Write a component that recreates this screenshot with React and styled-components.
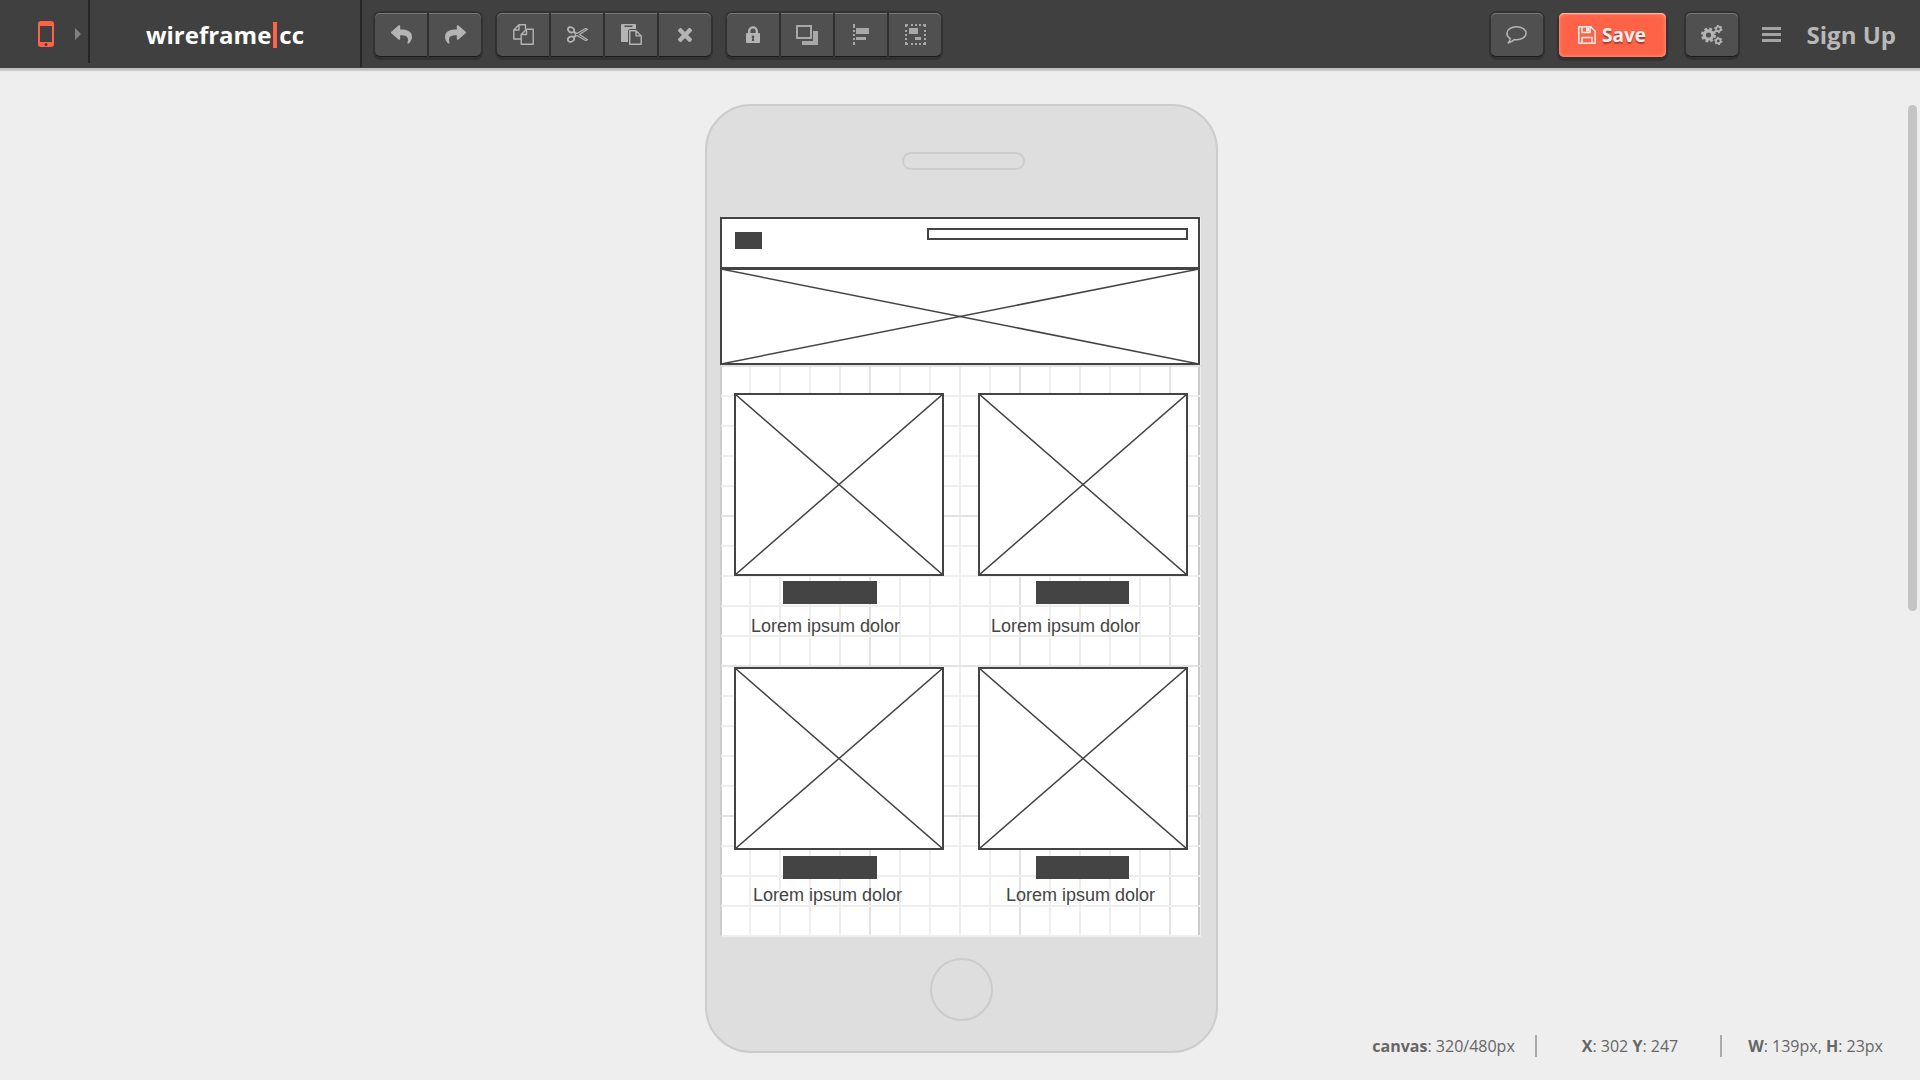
import React from "react";
import styled, { createGlobalStyle } from "styled-components";
import { FaReply, FaShare } from "react-icons/fa";

const Global = createGlobalStyle`
  *, *::before, *::after { box-sizing: border-box; }
  body { margin: 0; background: #eeeeee; font-family: "Open Sans", "Noto Sans", sans-serif; }
  button { font: inherit; padding: 0; border: 0; cursor: pointer; }
`;

const Page = styled.div`
  display: flex;
  flex-direction: column;
  min-height: 100vh;
`;

const TopBar = styled.header`
  display: flex;
  height: 68px;
  background: #404040;
  box-shadow: 0 2px 0 #c0c0c0, 0 3px 1px #d0d0d0;
`;

const DevicePicker = styled.button`
  display: flex;
  align-items: center;
  justify-content: flex-end;
  gap: 21px;
  width: 90px;
  height: 63px;
  padding: 5px 7px 0 0;
  background: none;
  border-right: 2px solid #262626;
`;

const Brand = styled.a`
  display: flex;
  align-items: center;
  justify-content: center;
  width: 272px;
  height: 67px;
  padding-top: 2px;
  border-right: 2px solid #262626;
  color: #ffffff;
  font-size: 24px;
  font-weight: 700;
  line-height: 26px;
  text-decoration: none;
`;

const Caret = styled.span`
  width: 4px;
  height: 26px;
  margin: 0 2px;
  background: #ff6347;
`;

const Tools = styled.div`
  display: flex;
  flex: 1;
  gap: 16px;
  padding: 13px 0 0 13px;
`;

const Group = styled.div`
  display: flex;
  align-self: flex-start;
  gap: 2px;
  border-radius: 6px;
  background: #303030;
  box-shadow: 0 0 0 2px #323232, 0 2px 0 2px #323232;
`;

const Tool = styled.button`
  display: flex;
  align-items: center;
  justify-content: center;
  width: 52px;
  height: 43px;
  background: #505050;
  color: #b4b4b4;
  box-shadow: inset 0 1px 0 #777777, 0 1px 0 #1c1c1c;
  &:first-child { border-radius: 5px 0 0 5px; }
  &:last-child { border-radius: 0 5px 5px 0; }
  &:only-child { border-radius: 5px; }
`;

const Actions = styled.div`
  display: flex;
  align-items: flex-start;
  padding: 13px 24px 0 0;
`;

const SaveButton = styled.button`
  display: flex;
  align-items: center;
  justify-content: center;
  gap: 6px;
  width: 107px;
  height: 44px;
  margin: 0 20px 0 16px;
  border-radius: 5px;
  background: #ff6347;
  color: #eeeeee;
  font-size: 19px;
  font-weight: 700;
  text-shadow: 0 2px 1px rgba(0, 0, 0, 0.35);
  box-shadow: inset 0 1px 1px #ffc0b4, inset 0 0 4px #ff9a86, 0 2px 0 2px #323232;
`;

const MenuButton = styled.button`
  display: flex;
  flex-direction: column;
  gap: 3px;
  margin: 14px 26px 0 24px;
  background: none;
`;

const MenuLine = styled.span`
  width: 19px;
  height: 3px;
  background: #a4a4a4;
`;

const SignUp = styled.a`
  color: #b8b8b8;
  font-size: 24px;
  font-weight: 700;
  line-height: 43px;
  text-decoration: none;
`;

const Workspace = styled.main`
  display: grid;
  grid-template-columns: 1fr auto 1fr;
  flex: 1;
  align-items: start;
  padding-top: 36px;
`;

const Phone = styled.section`
  display: flex;
  flex-direction: column;
  grid-column: 2;
  margin-left: 3px;
  margin-bottom: 28px;
  padding: 46px 16px 30px 13px;
  border: 2px solid #cccccc;
  border-radius: 46px;
  background: #dedede;
`;

const Speaker = styled.div`
  align-self: center;
  width: 123px;
  height: 18px;
  margin: 0 0 46px 6px;
  border: 2px solid #cccccc;
  border-radius: 9px;
`;

const HomeButton = styled.div`
  align-self: center;
  width: 63px;
  height: 63px;
  margin: 22px 0 0 2px;
  border: 2px solid #cccccc;
  border-radius: 50%;
`;

const Canvas = styled.div`
  position: relative;
  width: 480px;
  height: 720px;
  border-left: 2px solid #cccccc;
  border-right: 2px solid #cccccc;
  background-color: #ffffff;
`;

const Grid = styled.svg`
  position: absolute;
  left: -2px;
  top: 0;
  width: 482px;
  height: 721px;
`;

const Shape = styled.div`
  position: absolute;
  left: ${(p) => p.$x - 2}px;
  top: ${(p) => p.$y}px;
  width: ${(p) => p.$w}px;
  height: ${(p) => p.$h}px;
  border: 2px solid #444444;
  background: ${(p) => (p.$filled ? "#444444" : "#ffffff")};
`;

const Cross = styled.svg`
  display: block;
  width: calc(100% + 2px);
  height: calc(100% + 2px);
  margin: -1px;
`;

const Caption = styled.p`
  position: absolute;
  left: ${(p) => p.$x - 2}px;
  top: ${(p) => p.$y}px;
  margin: 0;
  color: #444444;
  font-family: "Liberation Sans", Arial, sans-serif;
  font-size: 18px;
  line-height: 22px;
  white-space: nowrap;
`;

const Status = styled.footer`
  display: flex;
  align-self: end;
  justify-content: flex-end;
  margin-bottom: 24px;
  padding-right: 37px;
  color: #666666;
  font-size: 16px;
  line-height: 22px;
  white-space: nowrap;
`;

const StatusItem = styled.span`
  padding: 0 ${(p) => p.$after}px 0 ${(p) => p.$before}px;
  & + & { border-left: 2px solid #aaaaaa; }
`;

const ScrollThumb = styled.div`
  position: fixed;
  top: 105px;
  right: 3px;
  width: 9px;
  height: 506px;
  border-radius: 5px;
  background: #c4c4c4;
`;

function ImageBox(props) {
  return (
    <Shape {...props}>
      <Cross viewBox="0 0 100 100" preserveAspectRatio="none">
        <path d="M0 0L100 100M100 0L0 100" stroke="#444" strokeWidth="1.5" vectorEffect="non-scaling-stroke" />
      </Cross>
    </Shape>
  );
}

const range = (n) => Array.from({ length: n }, (_, i) => i);

function GridLines() {
  return (
    <Grid>
      {range(16).map((i) => (
        <rect key={"v" + i} x={(i + 1) * 30 - (i === 15 ? 0 : 1)} y="0" width={i === 15 ? 1 : 2} height="721" fill={(i + 1) % 5 ? "#eeeeee" : "#e2e2e2"} />
      ))}
      {range(25).map((i) => (
        <rect key={"h" + i} x="1" y={i * 30 - 1} width="480" height="2" fill={i % 5 ? "#eeeeee" : "#e2e2e2"} />
      ))}
    </Grid>
  );
}

export default function App() {
  return (
    <Page>
      <Global />
      <TopBar>
        <DevicePicker aria-label="Choose device">
          <svg width="16" height="26" viewBox="0 0 16 26">
            <path fill="#ff6347" fillRule="evenodd" d="M3 0h10a3 3 0 0 1 3 3v20a3 3 0 0 1-3 3H3a3 3 0 0 1-3-3V3a3 3 0 0 1 3-3zM2 5v16h12V5zM8 22a1.500 1.500 0 1 0 0 3 1.500 1.500 0 0 0 0-3z" />
          </svg>
          <svg width="6" height="12" viewBox="0 0 6 12"><path d="M0 0L6 6L0 12z" fill="#808080" /></svg>
        </DevicePicker>
        <Brand href="#">wireframe<Caret />cc</Brand>
        <Tools>
          <Group>
            <Tool aria-label="Undo"><FaReply size={21} /></Tool>
            <Tool aria-label="Redo"><FaShare size={21} /></Tool>
          </Group>
          <Group>
            <Tool aria-label="Copy">
              <svg width="21" height="21" viewBox="0 0 21 21" fill="none" stroke="currentColor" strokeWidth="1.400" strokeLinejoin="round">
                <path d="M7.500 15H.8V6L6 .8h6.500v4.400M6 .8V6H.8M13.500 5.200h6.700v15H8.200v-9.700zM13.500 5.200v5.300H8.200" />
              </svg>
            </Tool>
            <Tool aria-label="Cut">
              <svg width="21" height="17" viewBox="0 0 21 17" fill="none" stroke="currentColor" strokeWidth="1.200">
                <ellipse cx="4" cy="3.800" rx="3.200" ry="2.500" strokeWidth="1.800" transform="rotate(25 4 3.800)" />
                <ellipse cx="4" cy="13.200" rx="3.200" ry="2.500" strokeWidth="1.800" transform="rotate(-25 4 13.200)" />
                <path d="M7 5.500L10 7.400 18.500 2.500 20.500 3.300 12.500 8.500 20.500 13.700 18.500 14.500 10 9.600 7 11.500M7 5.500L8.500 8.500 7 11.500" strokeLinejoin="round" />
              </svg>
            </Tool>
            <Tool aria-label="Paste">
              <svg width="21" height="21" viewBox="0 0 21 21">
                <path fill="currentColor" fillRule="evenodd" d="M1 0h13a1 1 0 0 1 1 1v4H9.500A2.500 2.500 0 0 0 7 7.500V18H1a1 1 0 0 1-1-1V1a1 1 0 0 1 1-1zM3.500 1.500V3h8V1.500z" />
                <path fill="none" stroke="currentColor" strokeWidth="1.400" strokeLinejoin="round" d="M8.700 6.700H15l5.200 5.200v8.300H8.700zM15 6.700v5.200h5.200" />
              </svg>
            </Tool>
            <Tool aria-label="Delete">
              <svg width="14" height="14" viewBox="0 0 14 14">
                <path d="M2.500 2.500l9 9M11.500 2.500l-9 9" stroke="currentColor" strokeWidth="4.400" strokeLinecap="square" strokeLinejoin="round" />
              </svg>
            </Tool>
          </Group>
          <Group>
            <Tool aria-label="Lock">
              <svg width="14" height="17" viewBox="0 0 14 17">
                <path fill="none" stroke="currentColor" strokeWidth="2.400" d="M3.200 8V5.200a3.800 3.800 0 0 1 7.600 0V8" />
                <path fill="currentColor" fillRule="evenodd" d="M1 7h12a1 1 0 0 1 1 1v8a1 1 0 0 1-1 1H1a1 1 0 0 1-1-1V8a1 1 0 0 1 1-1zM7 9.500a1.400 1.400 0 0 0-.7 2.600L5.700 15h2.600l-.6-2.900A1.400 1.400 0 0 0 7 9.500z" />
              </svg>
            </Tool>
            <Tool aria-label="Arrange">
              <svg width="22" height="20" viewBox="0 0 22 20">
                <path fill="#a8a8a8" d="M17 6h5v14H6v-4h11z" />
                <path fill="none" stroke="#a8a8a8" strokeWidth="2" d="M1 1h14v12H1z" />
              </svg>
            </Tool>
            <Tool aria-label="Align">
              <svg width="17" height="21" viewBox="0 0 17 21" fill="#a8a8a8">
                <path d="M0 0h2v4H0zM0 6h2v2H0zM0 10h2v2H0zM0 14h2v2H0zM0 18h2v3H0zM3 4h13v6H3zM3 13h10v3H3z" />
              </svg>
            </Tool>
            <Tool aria-label="Group">
              <svg width="21" height="21" viewBox="0 0 21 21" fill="#a8a8a8">
                <path d="M4 4h9v6H4zM10 13h6v3h-6z" />
                <path d="M0 0h3v2H2v1H0zM6 0h2v2H6zM10 0h2v2h-2zM14 0h2v2h-2zM18 0h3v3h-2V2h-1zM0 6h2v2H0zM0 10h2v2H0zM0 14h2v2H0zM19 6h2v2h-2zM19 10h2v2h-2zM19 14h2v2h-2zM0 18h2v1h1v2H0zM6 19h2v2H6zM10 19h2v2h-2zM14 19h2v2h-2zM19 18h2v3h-3v-2h1z" />
              </svg>
            </Tool>
          </Group>
        </Tools>
        <Actions>
          <Group>
            <Tool aria-label="Comments">
              <svg width="21" height="18" viewBox="0 0 21 18" fill="none" stroke="currentColor" strokeWidth="1.500" strokeLinejoin="round">
                <path d="M10.500.8c5.300 0 9.600 2.800 9.600 6.500s-4.300 6.500-9.600 6.500c-.8 0-1.600-.1-2.300-.2-1.500 1.500-3.300 2.700-6 3.300 1-1 1.900-2.400 2.100-4.300C2.200 11.400.9 9.500.9 7.300.9 3.600 5.200.8 10.500.8z" />
              </svg>
            </Tool>
          </Group>
          <SaveButton>
            <svg width="18" height="18" viewBox="0 0 18 18" fill="none" stroke="currentColor" strokeWidth="1.500" strokeLinejoin="round">
              <path d="M.8.800h12l4.400 4.400v12H.8zM4 17v-5.500h10V17M4 1v5.500h8V1" />
              <path d="M8 1.500h3v4H8z" fill="currentColor" stroke="none" />
            </svg>
            Save
          </SaveButton>
          <Group>
            <Tool aria-label="Settings">
              <svg width="22" height="20" viewBox="0 0 22 20" fill="none" stroke="currentColor">
                <circle cx="7.500" cy="10" r="4.200" strokeWidth="3.200" />
                <circle cx="7.500" cy="10" r="6.300" strokeWidth="2.400" strokeDasharray="2.800 2.148" />
                <circle cx="17.300" cy="4" r="2.300" strokeWidth="1.800" />
                <circle cx="17.300" cy="4" r="3.500" strokeWidth="1.400" strokeDasharray="1.800 1.865" />
                <circle cx="17.300" cy="16" r="2.300" strokeWidth="1.800" />
                <circle cx="17.300" cy="16" r="3.500" strokeWidth="1.400" strokeDasharray="1.800 1.865" />
              </svg>
            </Tool>
          </Group>
          <MenuButton aria-label="Menu"><MenuLine /><MenuLine /><MenuLine /></MenuButton>
          <SignUp href="#">Sign Up</SignUp>
        </Actions>
      </TopBar>
      <Workspace>
        <Phone>
          <Speaker />
          <Canvas>
            <GridLines />
            <Shape $x={0} $y={1} $w={480} $h={52} />
            <Shape $x={15} $y={16} $w={27} $h={17} $filled />
            <Shape $x={207} $y={12} $w={261} $h={12} />
            <ImageBox $x={0} $y={52} $w={480} $h={97} />
            <ImageBox $x={14} $y={177} $w={210} $h={183} />
            <ImageBox $x={258} $y={177} $w={210} $h={183} />
            <Shape $x={63} $y={365} $w={94} $h={23} $filled />
            <Shape $x={316} $y={365} $w={93} $h={23} $filled />
            <Caption $x={31} $y={399}>Lorem ipsum dolor</Caption>
            <Caption $x={271} $y={399}>Lorem ipsum dolor</Caption>
            <ImageBox $x={14} $y={451} $w={210} $h={183} />
            <ImageBox $x={258} $y={451} $w={210} $h={183} />
            <Shape $x={63} $y={640} $w={94} $h={23} $filled />
            <Shape $x={316} $y={640} $w={93} $h={23} $filled />
            <Caption $x={33} $y={668}>Lorem ipsum dolor</Caption>
            <Caption $x={286} $y={668}>Lorem ipsum dolor</Caption>
          </Canvas>
          <HomeButton />
        </Phone>
        <Status>
          <StatusItem $before={0} $after={20}><b>canvas</b>: 320/480px</StatusItem>
          <StatusItem $before={45} $after={42}><b>X</b>: 302 <b>Y</b>: 247</StatusItem>
          <StatusItem $before={26} $after={0}><b>W</b>: 139px, <b>H</b>: 23px</StatusItem>
        </Status>
      </Workspace>
      <ScrollThumb />
    </Page>
  );
}
